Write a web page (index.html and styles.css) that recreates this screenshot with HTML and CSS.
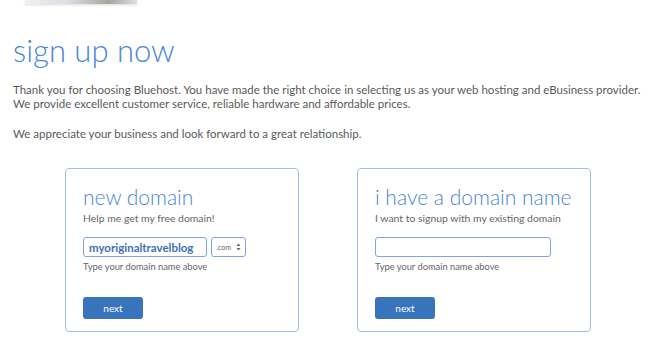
FILE: index.html
```html
<!DOCTYPE html>
<html lang="en">
<head>
  <meta charset="UTF-8" />
  <title>Sign up now</title>
  <link rel="stylesheet" href="styles.css">
</head>
<body>

<div class="paper-edge"></div>

<h1 class="title">sign up now</h1>

<p class="intro">Thank you for choosing Bluehost. You have made the right choice in selecting us as your web hosting and eBusiness provider.<br>
We provide excellent customer service, reliable hardware and affordable prices.</p>

<p class="intro second">We appreciate your business and look forward to a great relationship.</p>

<div class="boxes">
  <div class="box">
    <h2>new domain</h2>
    <p class="sub">Help me get my free domain!</p>
    <div class="field-row">
      <input type="text" class="domain short" value="myoriginaltravelblog">
      <div class="tld">.com
        <svg class="arrows" width="5" height="8" viewBox="0 0 5 8"><path d="M2.5 0.5 L4.5 3 L0.5 3 Z M2.5 7.5 L4.5 5 L0.5 5 Z" fill="#666"/></svg>
      </div>
    </div>
    <p class="hint">Type your domain name above</p>
    <button class="next">next</button>
  </div>

  <div class="box">
    <h2>i have a domain name</h2>
    <p class="sub">I want to signup with my existing domain</p>
    <div class="field-row">
      <input type="text" class="domain long" value="">
    </div>
    <p class="hint">Type your domain name above</p>
    <button class="next">next</button>
  </div>
</div>

</body>
</html>
```

FILE: styles.css
```css
body {
  margin: 0;
  font-family: Lato, "Open Sans", sans-serif;
  color: #555;
  background: #fff;
}
.paper-edge {
  width: 112px;
  height: 4px;
  margin-left: 25px;
  background: linear-gradient(to right, #f0f1f3, #d9dce2 40%, #a9a49e 75%, #dde0e6);
  box-shadow: 0 1px 3px rgba(0,0,0,0.15);
}
.title {
  margin: 28px 0 0 13px;
  font-size: 31px;
  font-weight: 300;
  color: #4a86d6;
  line-height: 36px;
}
.intro {
  margin: 15px 0 0 13px;
  font-size: 11.5px;
  line-height: 14px;
  color: #5a5a5a;
}
.intro.second {
  margin-top: 16px;
}
.boxes {
  display: flex;
  gap: 58px;
  padding-left: 65px;
  margin-top: 27px;
}
.box {
  width: 215px;
  height: 146px;
  padding: 16px 0 0 17px;
  border: 1px solid #9fbdec;
  border-radius: 4px;
}
.box h2 {
  margin: 0;
  font-size: 21px;
  font-weight: 300;
  color: #4a86d6;
  line-height: 24px;
}
.sub {
  margin: 2px 0 0;
  font-size: 10.4px;
  line-height: 14px;
  color: #666;
}
.field-row {
  display: flex;
  gap: 4px;
  margin-top: 12px;
}
.domain {
  box-sizing: border-box;
  height: 20px;
  padding: 0 5px;
  border: 1px solid #7ea6e2;
  border-radius: 3px;
  font-family: Lato, sans-serif;
  font-size: 11.5px;
  font-weight: 700;
  color: #3d6fb5;
  outline: none;
}
.short { width: 124px; }
.long { width: 176px; }
.tld {
  box-sizing: border-box;
  width: 35px;
  height: 20px;
  border: 1px solid #7ea6e2;
  border-radius: 3px;
  font-size: 7px;
  color: #666;
  display: flex;
  align-items: center;
  justify-content: flex-end;
  gap: 5px;
  padding-right: 4px;
}
.hint {
  margin: 3px 0 0;
  font-size: 9.3px;
  line-height: 13px;
  color: #666;
}
.next {
  margin-top: 24px;
  width: 60px;
  height: 22px;
  border: none;
  border-radius: 3px;
  background: #3774bb;
  color: #fff;
  font-family: Lato, sans-serif;
  font-size: 10px;
  cursor: pointer;
}
```
